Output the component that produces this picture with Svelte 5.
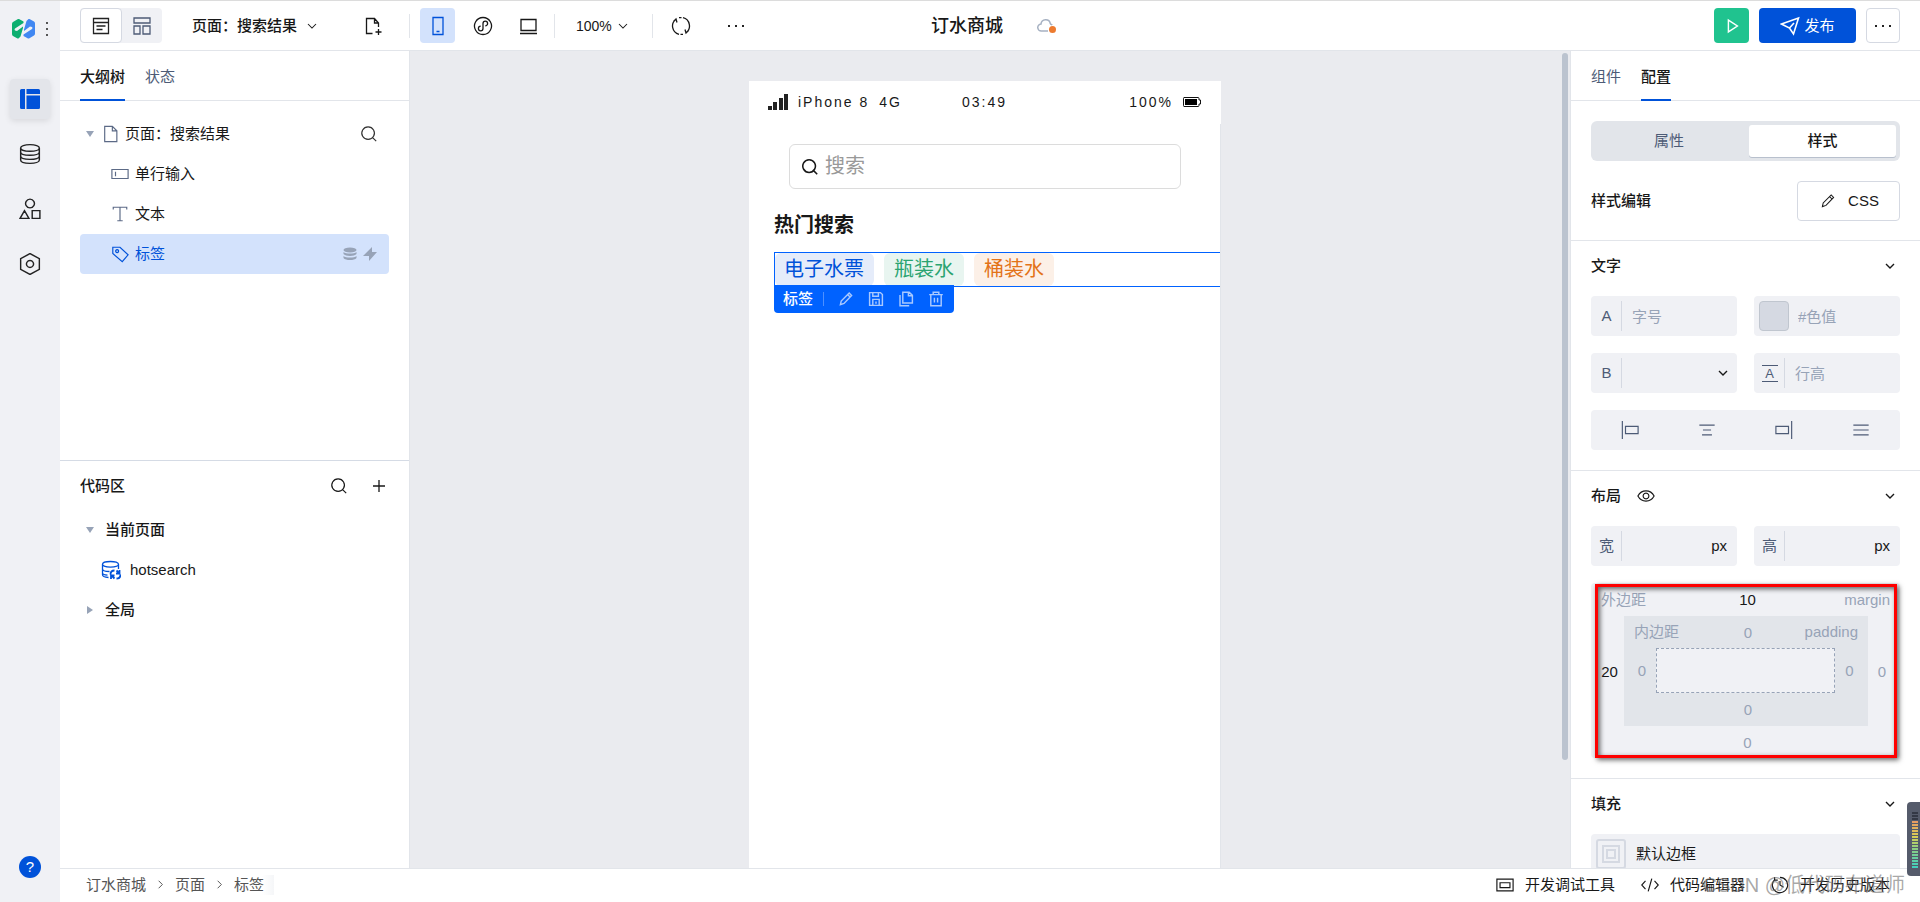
<script lang="ts">
  // Stroke icons on a 20x20 grid
  const ICONS: Record<string, string> = {
    list: 'M2.5 2.5h15v15h-15zM2.5 6.5h15M5.5 10h9M5.5 13.5h6',
    layout: 'M2 2h16v5H2zM2 10h6v8H2zM11 10h7v8h-7z',
    chevron: 'M5 7.5l5 5 5-5',
    chevronRight: 'M7.5 5l5 5-5 5',
    filePlus: 'M9.5 17.5H3.500v-15h8L15.500 7v4M11.500 2.500V7h4M15.500 13v6M12.500 16h6',
    file: 'M3 1.500h8.500l5 5v12H3zM11.500 1.500v5h5',
    phone: 'M5 1.500h10v17H5zM8.500 15.500h3',
    mini: 'M10 1.500a8.500 8.500 0 1 0 .01 0M10 12.500a2.300 2.300 0 1 1-2.300-2.300M10 12.500v-5M10 7.500a2.300 2.300 0 1 1 2.300 2.300',
    laptop: 'M3 3.500h15v11H3zM2 17.500h17',
    refresh: 'M5 3.200a8.500 8.500 0 0 0 3 15.100M15 16.800a8.500 8.500 0 0 0-3-15.100M2.500 5.500l2.500-2.500 1 3.500M17.500 14.500l-2.500 2.500-1-3.500M8 1.700h2.500M9.500 18.400h2.500',
    search: 'M9 2a7 7 0 1 0 .01 0M14 14l4 4',
    plus: 'M10 4v12M4 10h12',
    input: 'M1 5h18v10H1zM5 7.500v5',
    text: 'M2.500 5V2.500h15V5M10 3v14.500M7 17.500h6',
    tag: 'M2 2.500h8l9 8.500-6.500 7.500L2 9.500zM6.800 5.200a1.600 1.600 0 1 0 .01 0',
    database: 'M10 1.500c-5 0-8.500 1.200-8.500 3s3.500 3 8.500 3 8.500-1.200 8.500-3-3.500-3-8.500-3zM1.500 4.500v11c0 1.800 3.500 3 8.500 3s8.500-1.200 8.500-3v-11M1.500 8.200c0 1.800 3.500 3 8.500 3s8.500-1.200 8.500-3M1.500 11.900c0 1.800 3.500 3 8.500 3s8.500-1.200 8.500-3',
    shapes: 'M10 1a4 4 0 1 0 .01 0M5 11.500l-4 7h8zM12 11.500h7v7h-7z',
    hexagon: 'M10 .5l8.500 4.700v9.600L10 19.500l-8.500-4.700V5.200zM10 6.800a3.200 3.200 0 1 0 .01 0',
    play: 'M6 3.500l10 6.500-10 6.500z',
    send: 'M1.500 8L18.500 2l-5 16-4-6zM9.500 12L14 7',
    pencil: 'M3 17l1-4.500L14 2.500l3 3L7.500 15.500zM12 4.500l3 3',
    save: 'M2 2h13.500L18 4.500V18H2zM6 2v4.500h7V2M6 18v-7.500h8V18M10 13v3',
    copy: 'M6 1.500h8l4 4V15H6zM13 1.500V6h5M2.500 5v13.500H14',
    trash: 'M1.500 4.500h17M6.500 4.500V1.500h7v3M3.500 4.500v14h13v-14M8 8.500v6M12 8.500v6',
    eye: 'M1 10c4-7.500 14-7.500 18 0-4 7.500-14 7.500-18 0zM10 6.800a3.200 3.200 0 1 0 .01 0',
    alignLeft: 'M1.500 0v20M5 6h14v8H5z',
    alignCenter: 'M1.500 4.500h17M5.500 10h9M4.500 15.500h11',
    alignRight: 'M18.500 0v20M1 6h14v8H1z',
    justify: 'M1.500 4.500h17M1.500 10h17M1.500 15.500h17',
    debug: 'M1 3.500h18v13H1zM4.500 7.500h11v5.500h-11z',
    code: 'M5 5.500L.8 10 5 14.500M15 5.500l4.200 4.500-4.200 4.500M12 3L8 17',
    history: 'M4 4a8.500 8.500 0 1 0 6-2.500M4 1v3.500h3.500M10 5.500V10l4 2.500'
  };

  const rail = ['database', 'shapes', 'hexagon'];

  const tree = [
    { icon: 'input', label: '单行输入' },
    { icon: 'text', label: '文本' },
    { icon: 'tag', label: '标签', selected: true }
  ];

  const tags = [
    { label: '电子水票', tone: 'blue' },
    { label: '瓶装水', tone: 'green' },
    { label: '桶装水', tone: 'orange' }
  ];

  const tagActions = [
    { icon: 'pencil', label: '编辑' },
    { icon: 'save', label: '保存' },
    { icon: 'copy', label: '复制' },
    { icon: 'trash', label: '删除' }
  ];

  const crumbs = ['订水商城', '页面', '标签'];

  const tools = [
    { icon: 'debug', label: '开发调试工具' },
    { icon: 'code', label: '代码编辑器' },
    { icon: 'history', label: '开发历史版本' }
  ];

  const aligns = ['alignLeft', 'alignCenter', 'alignRight', 'justify'];

  let margin = $state({ top: '10', right: '0', bottom: '0', left: '20' });
  let padding = $state({ top: '0', right: '0', bottom: '0', left: '0' });
</script>

{#snippet icon(name: string, size = 18)}
  <svg class="icon" width={size} height={size} viewBox="0 0 20 20" aria-hidden="true"><path d={ICONS[name]} /></svg>
{/snippet}

{#snippet sectionTitle(label: string, withEye = false)}
  <header class="section-head">
    <h3>{label}</h3>
    {#if withEye}
      <button class="plain" aria-label="显示">{@render icon('eye', 18)}</button>
    {/if}
    <button class="plain fold" aria-label="收起{label}">{@render icon('chevron', 16)}</button>
  </header>
{/snippet}

{#snippet sideInput(box: Record<string, string>, side: string, label: string)}
  <input class="side side-{side}" class:set={box[side] !== '0'} aria-label="{label} {side}" bind:value={box[side]} />
{/snippet}

<div class="app">
  <aside class="rail">
    <div class="brand">
      <svg width="24" height="20" viewBox="0 0 24 20" aria-hidden="true">
        <path fill="#0daf70" d="M0 5q0-1.500 1-2l5-3h1l4.500 2.500v1.500L3 9.500q-1 1 0 2l2 .5 6-4.500V9L8.500 17.500 6.500 19.500h-1L1 17q-1-.5-1-2z" />
        <path fill="#4188f2" transform="rotate(180 11.500 9.750)" d="M0 5q0-1.500 1-2l5-3h1l4.500 2.500v1.500L3 9.500q-1 1 0 2l2 .5 6-4.500V9L8.500 17.500 6.500 19.500h-1L1 17q-1-.5-1-2z" />
      </svg>
      <span class="brand-dots"><i></i><i></i><i></i></span>
    </div>
    <nav class="rail-nav">
      <button class="rail-item active" aria-label="页面设计">
        <svg width="20" height="20" viewBox="0 0 20 20" aria-hidden="true">
          <path fill="#0052d9" d="M1.500 0H5v20H1.500Q0 20 0 18.500v-17Q0 0 1.500 0zM6.500 0h12Q20 0 20 1.500V5H6.500zM6.500 6.500H20v12q0 1.500-1.500 1.500h-12z" />
        </svg>
      </button>
      {#each rail as name}
        <button class="rail-item" aria-label={name}>{@render icon(name, 22)}</button>
      {/each}
    </nav>
    <button class="help" aria-label="帮助">?</button>
  </aside>

  <div class="main">
    <header class="topbar">
      <div class="top-left">
        <div class="mode">
          <button class="mode-btn active" aria-label="列表视图">{@render icon('list', 20)}</button>
          <button class="mode-btn" aria-label="布局视图">{@render icon('layout', 20)}</button>
        </div>
        <button class="plain page-name">页面：搜索结果 {@render icon('chevron', 16)}</button>
        <button class="plain new-page" aria-label="新建页面">{@render icon('filePlus', 20)}</button>
        <span class="divider"></span>
        <div class="devices">
          <button class="device active" aria-label="手机">{@render icon('phone', 20)}</button>
          <button class="device" aria-label="小程序">{@render icon('mini', 20)}</button>
          <button class="device" aria-label="电脑">{@render icon('laptop', 20)}</button>
        </div>
        <span class="divider"></span>
        <button class="plain zoom">100%{@render icon('chevron', 16)}</button>
        <span class="divider"></span>
        <button class="plain refresh" aria-label="刷新">{@render icon('refresh', 20)}</button>
        <button class="plain dots" aria-label="更多"><i></i><i></i><i></i></button>
      </div>
      <div class="top-center">
        <h1>订水商城</h1>
        <svg class="cloud" width="20" height="16" viewBox="0 0 20 16" aria-hidden="true">
          <path fill="none" stroke="#a6b1c2" stroke-width="1.500" d="M11 13H4.500a3.500 3.500 0 0 1-.5-7 4.700 4.700 0 0 1 9.300-.5c.2 1 1.500 1 2 1.500" />
          <circle cx="15.500" cy="11.500" r="3.500" fill="#ed7b2f" />
        </svg>
      </div>
      <div class="top-right">
        <button class="run" aria-label="预览">{@render icon('play', 18)}</button>
        <button class="publish">{@render icon('send', 20)}发布</button>
        <button class="more dots" aria-label="更多操作"><i></i><i></i><i></i></button>
      </div>
    </header>

    <div class="workspace">
      <section class="left-panel">
        <div class="outline">
          <div class="tabs">
            <button class="tab active">大纲树</button>
            <button class="tab">状态</button>
          </div>
          <ul class="tree">
            <li class="row root">
              <span class="caret"></span>
              {@render icon('file', 18)}
              <span class="label">页面：搜索结果</span>
              <button class="plain root-search" aria-label="搜索组件">{@render icon('search', 18)}</button>
            </li>
            {#each tree as node}
              <li class="row child" class:selected={node.selected}>
                {@render icon(node.icon, 18)}
                <span class="label">{node.label}</span>
                {#if node.selected}
                  <span class="badges">
                    <svg width="14" height="14" viewBox="0 0 14 14" aria-hidden="true">
                      <ellipse cx="7" cy="3" rx="6.500" ry="2.500" />
                      <path d="M.5 5c2 2 11 2 13 0v2c-2 2.500-11 2.500-13 0zM.5 9c2 2 11 2 13 0v2c-2 2.800-11 2.800-13 0z" />
                    </svg>
                    <svg width="14" height="14" viewBox="0 0 14 14" aria-hidden="true"><path d="M9 0v5h5L6 14V9H0z" /></svg>
                  </span>
                {/if}
              </li>
            {/each}
          </ul>
        </div>

        <div class="code">
          <header class="code-head">
            <h2>代码区</h2>
            <button class="plain" aria-label="搜索代码">{@render icon('search', 18)}</button>
            <button class="plain" aria-label="新增">{@render icon('plus', 20)}</button>
          </header>
          <ul class="tree">
            <li class="row group"><span class="caret"></span><span class="label">当前页面</span></li>
            <li class="row script">
              <svg class="icon" width="20" height="20" viewBox="0 0 20 20" aria-hidden="true">
                <path d="M9.500 1.500c-4.500 0-8 1-8 2.800s3.500 2.800 8 2.800 8-1 8-2.800-3.500-2.800-8-2.800zM1.500 4.300v10.500c0 1.500 2 2.500 6 2.700M17.500 4.300V9M1.500 9c0 1.500 2.500 2.500 7 2.500M1.500 13c0 1 1.500 1.800 5 2.200" />
                <path stroke-width="1.800" d="M9.500 14.500c0-2.500 1.500-4 4-4M15.500 10.500l3 3M19.500 14.500c0 2.500-1.500 4-4 4M13.500 18.500l-3-3M18.500 10v3.500H15M10 19v-3.500h3.500" />
              </svg>
              <span class="label">hotsearch</span>
            </li>
            <li class="row group"><span class="caret closed"></span><span class="label">全局</span></li>
          </ul>
        </div>
      </section>

      <main class="canvas">
        <div class="stage">
          <div class="device-frame">
            <div class="status">
              <span class="carrier">
                <svg width="20" height="16" viewBox="0 0 20 16" aria-hidden="true"><path d="M0 12h4v4H0zM5 8h4v8H5zM11 4h4v12h-4zM16 0h4v16h-4z" fill="#222" /></svg>
                <span>iPhone 8</span>
                <span>4G</span>
              </span>
              <span>03:49</span>
              <span class="power">
                <span>100%</span>
                <svg width="18" height="10" viewBox="0 0 18 10" aria-hidden="true">
                  <path d="M1 .5h14q1 0 1 1V3h1.500v4H16v1.500q0 1-1 1H1q-.5 0-.5-1v-7q0-1 .5-1z" fill="none" stroke="#111" />
                  <path d="M2 2h12v6H2z" fill="#000" />
                </svg>
              </span>
            </div>
            <div class="screen">
              <label class="search-box">
                {@render icon('search', 18)}
                <input placeholder="搜索" aria-label="搜索" />
              </label>
              <h2>热门搜索</h2>
              <div class="tag-row">
                {#each tags as tag}
                  <span class="tag {tag.tone}">{tag.label}</span>
                {/each}
                <div class="tag-bar">
                  <span class="tag-bar-name">标签</span>
                  {#each tagActions as action}
                    <button class="plain" aria-label={action.label}>{@render icon(action.icon, 16)}</button>
                  {/each}
                </div>
              </div>
            </div>
          </div>
        </div>
        <div class="scroll"><span class="thumb"></span></div>
      </main>

      <aside class="right-panel">
        <div class="tabs">
          <button class="tab">组件</button>
          <button class="tab active">配置</button>
        </div>
        <div class="config">
          <section class="intro">
            <div class="switch">
              <button>属性</button>
              <button class="on">样式</button>
            </div>
            <div class="edit-row">
              <h3>样式编辑</h3>
              <button class="css-btn">{@render icon('pencil', 16)}CSS</button>
            </div>
          </section>

          <section class="group-box">
            {@render sectionTitle('文字')}
            <div class="fields">
              <label class="field"><span class="prefix">A</span><input placeholder="字号" /></label>
              <label class="field"><span class="swatch"></span><input placeholder="#色值" /></label>
              <label class="field">
                <span class="prefix">B</span>
                <select aria-label="字重"><option></option></select>
                {@render icon('chevron', 16)}
              </label>
              <label class="field">
                <span class="prefix"><span class="line-height">A</span></span>
                <input placeholder="行高" />
              </label>
              <div class="aligns">
                {#each aligns as name}
                  <button class="plain" aria-label={name}>{@render icon(name, 18)}</button>
                {/each}
              </div>
            </div>
          </section>

          <section class="group-box">
            {@render sectionTitle('布局', true)}
            <div class="fields">
              <label class="field"><span class="prefix">宽</span><input /><span class="unit">px</span></label>
              <label class="field"><span class="prefix">高</span><input /><span class="unit">px</span></label>
              <div class="margin-box">
                <div class="box-top"><span>外边距</span>{@render sideInput(margin, 'top', '外边距')}<span>margin</span></div>
                {@render sideInput(margin, 'left', '外边距')}
                <div class="padding-box">
                  <div class="box-top"><span>内边距</span>{@render sideInput(padding, 'top', '内边距')}<span>padding</span></div>
                  {@render sideInput(padding, 'left', '内边距')}
                  <div class="content-box"></div>
                  {@render sideInput(padding, 'right', '内边距')}
                  <div class="box-bottom">{@render sideInput(padding, 'bottom', '内边距')}</div>
                </div>
                {@render sideInput(margin, 'right', '外边距')}
                <div class="box-bottom">{@render sideInput(margin, 'bottom', '外边距')}</div>
                <div class="highlight"></div>
              </div>
            </div>
          </section>

          <section class="group-box">
            {@render sectionTitle('填充')}
            <button class="border-pick">
              <svg width="30" height="30" viewBox="0 0 30 30" aria-hidden="true">
                <rect x="1" y="1" width="28" height="28" rx="2" />
                <rect x="7" y="7" width="16" height="16" />
                <rect x="11" y="11" width="8" height="8" />
              </svg>
              默认边框
            </button>
          </section>
        </div>
      </aside>
    </div>

    <footer class="bottom-bar">
      <nav class="crumbs">
        {#each crumbs as crumb, i}
          {#if i > 0}{@render icon('chevronRight', 15)}{/if}
          <a href="#{i}" class:last={i === crumbs.length - 1}>{crumb}</a>
        {/each}
      </nav>
      <div class="tools">
        {#each tools as tool}
          <button class="plain tool">{@render icon(tool.icon, 18)}{tool.label}</button>
        {/each}
      </div>
      <span class="watermark">CSDN @低代码布道师</span>
    </footer>
  </div>

  <div class="meter"><span></span></div>
</div>

<style>
  :global(body) {
    margin: 0;
    overflow: hidden;
  }

  .app,
  .app :is(button, input, select) {
    font-family: 'Liberation Sans', 'Noto Sans CJK SC', sans-serif;
    font-size: 15px;
  }

  .app {
    position: relative;
    display: flex;
    height: 100vh;
    box-sizing: border-box;
    border-top: 1px solid #dcdcdc;
    color: #181818;
    line-height: 20px;
    background: #fff;
  }

  .app :is(button, input, select, div, header, aside, label, span) {
    box-sizing: border-box;
  }

  h1,
  h2,
  h3,
  ul {
    margin: 0;
    padding: 0;
    list-style: none;
  }

  h2,
  h3 {
    font-size: 15px;
    font-weight: 500;
  }

  button {
    display: flex;
    align-items: center;
    justify-content: center;
    padding: 0;
    border: none;
    background: none;
    color: inherit;
    line-height: 20px;
    cursor: pointer;
  }

  input {
    flex: 1;
    min-width: 0;
    width: 100%;
    padding: 0;
    border: none;
    outline: none;
    background: none;
    color: #181818;
  }

  .icon {
    flex-shrink: 0;
    fill: none;
    stroke: currentColor;
    stroke-width: 1.300;
  }

  /* Rail */
  .rail {
    display: flex;
    flex-direction: column;
    align-items: center;
    width: 60px;
    flex-shrink: 0;
    padding: 18px 0 24px;
    background: #f0f1f5;
  }

  .brand {
    display: flex;
    align-items: center;
    gap: 10px;
    height: 20px;
  }

  .brand-dots {
    display: flex;
    flex-direction: column;
    gap: 4px;
  }

  .brand-dots i {
    width: 2px;
    height: 2px;
    background: #555;
  }

  .rail-nav {
    display: flex;
    flex-direction: column;
    gap: 15px;
    margin-top: 40px;
  }

  .rail-item {
    width: 40px;
    height: 40px;
    border-radius: 4px;
    color: #222;
  }

  .rail-item.active {
    background: #e3e5ea;
    box-shadow: 0 2px 6px rgba(0, 0, 0, 0.1);
  }

  .help {
    width: 22px;
    height: 22px;
    margin-top: auto;
    border-radius: 50%;
    background: #0052d9;
    color: #fff;
  }

  .main {
    display: flex;
    flex-direction: column;
    flex: 1;
    min-width: 0;
  }

  /* Top bar */
  .topbar {
    display: flex;
    align-items: center;
    height: 50px;
    flex-shrink: 0;
    padding: 0 20px;
    border-bottom: 1px solid #e2e5ea;
  }

  .top-left,
  .top-right {
    display: flex;
    align-items: center;
    flex: 1 1 0;
  }

  .top-right {
    justify-content: flex-end;
    gap: 10px;
  }

  .top-center {
    display: flex;
    align-items: center;
    gap: 34px;
    padding-left: 8px;
  }

  h1 {
    font-size: 18px;
    font-weight: 500;
  }

  .mode {
    display: flex;
    background: #f0f1f5;
    border-radius: 4px;
  }

  .mode-btn {
    width: 40px;
    height: 35px;
    color: #4d5b76;
  }

  .mode-btn.active {
    width: 42px;
    border: 1px solid #d5d9e2;
    border-radius: 4px;
    background: #fff;
    color: #222;
  }

  .page-name {
    margin-left: 30px;
    gap: 7px;
    font-weight: 500;
  }

  .new-page {
    margin: 0 26px 0 43px;
  }

  .divider {
    width: 1px;
    height: 24px;
    background: #e2e5ea;
  }

  .devices {
    display: flex;
    gap: 10px;
    padding: 0 9px 0 10px;
  }

  .device {
    width: 35px;
    height: 35px;
    border-radius: 4px;
  }

  .device.active {
    background: #d3e2fc;
    color: #0052d9;
  }

  .topbar .zoom {
    margin: 0 21px;
    gap: 3px;
    font-size: 14px;
  }

  .refresh {
    margin: 0 37px 0 18px;
  }

  .dots {
    gap: 5px;
  }

  .dots i {
    width: 2px;
    height: 2px;
    background: #222;
  }

  .run {
    width: 35px;
    height: 35px;
    border-radius: 4px;
    background: #20c38f;
    color: #fff;
  }

  .publish {
    width: 97px;
    height: 35px;
    gap: 4px;
    border-radius: 4px;
    background: #0052d9;
    color: #fff;
  }

  .run .icon,
  .publish .icon {
    stroke-width: 1.600;
  }

  .more {
    width: 34px;
    height: 35px;
    border: 1px solid #d5d9e2;
    border-radius: 4px;
  }

  /* Workspace */
  .workspace {
    display: flex;
    flex: 1;
    min-height: 0;
  }

  .left-panel {
    display: grid;
    grid-template-rows: 1fr 1fr;
    width: 350px;
    flex-shrink: 0;
    box-sizing: border-box;
    border-right: 1px solid #e2e5ea;
  }

  .tabs {
    display: flex;
    gap: 20px;
    height: 50px;
    flex-shrink: 0;
    padding: 0 20px;
    border-bottom: 1px solid #e2e5ea;
  }

  .tab {
    height: 50px;
    border-top: 4px solid transparent;
    border-bottom: 2px solid transparent;
    color: #4d5b76;
  }

  .tab.active {
    border-bottom-color: #0052d9;
    color: #181818;
    font-weight: 500;
  }

  .outline .tree {
    padding: 13px 20px 0;
  }

  .row {
    display: flex;
    align-items: center;
    height: 40px;
    border-radius: 4px;
  }

  .row .icon {
    color: #5c6a86;
  }

  .row .root-search .icon {
    color: #333;
  }

  .root,
  .group {
    padding-left: 6px;
  }

  .caret {
    margin-right: 8px;
    border: 4px solid transparent;
    border-top: 6px solid #97a3b7;
    border-bottom: none;
  }

  .caret.closed {
    margin: 0 9px 0 1px;
    border: 4px solid transparent;
    border-left: 6px solid #97a3b7;
    border-right: none;
  }

  .root .label {
    margin-left: 5px;
  }

  .root-search {
    margin: 0 11px 0 auto;
  }

  .child {
    padding: 0 12px 0 31px;
    gap: 6px;
  }

  .selected {
    background: #d3e2fc;
  }

  .selected .icon,
  .selected .label,
  .script .icon {
    color: #0052d9;
  }

  .badges {
    display: flex;
    gap: 6px;
    margin-left: auto;
    fill: #97a3b7;
  }

  .code {
    border-top: 1px solid #d5dbe5;
  }

  .code-head {
    display: flex;
    align-items: center;
    gap: 21px;
    height: 49px;
    padding: 2px 20px 0;
  }

  .code-head h2 {
    margin-right: auto;
  }

  .code .tree {
    padding: 0 20px;
  }

  .group .label {
    margin-left: 3px;
    font-weight: 500;
  }

  .script {
    padding-left: 21px;
    gap: 9px;
  }

  /* Canvas */
  .canvas {
    display: flex;
    flex: 1;
    min-width: 0;
    background: #eaebef;
  }

  .stage {
    display: flex;
    justify-content: center;
    flex: 1;
    padding-top: 30px;
  }

  .device-frame {
    display: flex;
    flex-direction: column;
    width: 472px;
  }

  .status {
    display: grid;
    grid-template-columns: 1fr auto 1fr;
    align-items: center;
    height: 43px;
    padding: 0 20px 2px 19px;
    background: #fff;
    font-size: 14px;
    letter-spacing: 2px;
  }

  .carrier,
  .power {
    display: flex;
    align-items: center;
    gap: 10px;
  }

  .power {
    justify-content: flex-end;
  }

  .screen {
    flex: 1;
    padding: 20px 0 0 25px;
    background: #fff;
    border-right: 1px solid #e2e5ea;
  }

  .search-box {
    display: flex;
    align-items: center;
    gap: 6px;
    height: 45px;
    margin: 0 39px 0 15px;
    padding: 0 11px;
    border: 1px solid #dcdcdc;
    border-radius: 6px;
  }

  .search-box .icon {
    stroke-width: 1.700;
  }

  .search-box input {
    font-size: 20px;
  }

  .search-box input::placeholder {
    color: #999;
  }

  .screen h2 {
    margin: 21px 0 12px;
    font-size: 20px;
    font-weight: 700;
    line-height: 30px;
  }

  .tag-row {
    position: relative;
    display: flex;
    gap: 10px;
    border: 1px solid #0062ff;
    border-right: none;
  }

  .tag {
    padding: 0 10px;
    border-radius: 6px;
    font-size: 20px;
    line-height: 33px;
  }

  .tag:first-child {
    padding-left: 9px;
  }

  .tag.blue {
    background: #e5ecfa;
    color: #0052d9;
  }

  .tag.green {
    background: #e8f5f0;
    color: #2ba471;
  }

  .tag.orange {
    background: #fcf0e7;
    color: #e37318;
  }

  .tag-bar {
    position: absolute;
    top: calc(100% - 1px);
    left: -1px;
    display: flex;
    align-items: center;
    gap: 14px;
    height: 28px;
    padding: 0 10px 1px 9px;
    border-radius: 0 0 4px 4px;
    background: #0062ff;
    color: #a9c9ff;
  }

  .tag-bar .icon {
    stroke-width: 1.800;
  }

  .tag-bar-name {
    padding-right: 10px;
    border-right: 1px solid #4d90ff;
    color: #fff;
    line-height: 14px;
    font-weight: 500;
  }

  .scroll {
    width: 10px;
    padding: 2px 2px 108px;
  }

  .thumb {
    display: block;
    height: 100%;
    border-radius: 3px;
    background: #bbc3cf;
  }

  /* Config panel */
  .right-panel {
    display: flex;
    flex-direction: column;
    width: 350px;
    flex-shrink: 0;
    border-left: 1px solid #e2e5ea;
  }

  .config {
    flex: 1;
    min-height: 0;
    overflow: hidden;
  }

  .intro {
    padding: 20px 20px 19px;
  }

  .switch {
    display: grid;
    grid-template-columns: 154px 1fr;
    height: 40px;
    box-sizing: border-box;
    padding: 4px;
    border-radius: 6px;
    background: #e2e5ea;
    color: #4d5b76;
  }

  .switch button:first-child {
    padding-right: 6px;
  }

  .switch .on {
    border-radius: 3px;
    background: #fff;
    box-shadow: 0 1px 0 #b8c0cd;
    color: #181818;
    font-weight: 500;
  }

  .edit-row {
    display: flex;
    align-items: center;
    justify-content: space-between;
    margin-top: 20px;
  }

  .css-btn {
    gap: 12px;
    width: 103px;
    height: 40px;
    padding-left: 2px;
    border: 1px solid #d5d9e2;
    border-radius: 4px;
  }

  .group-box {
    padding: 0 20px 20px;
    border-top: 1px solid #e2e5ea;
  }

  .section-head {
    display: flex;
    align-items: center;
    gap: 16px;
    height: 50px;
    margin-bottom: 5px;
  }

  .fold {
    margin: 0 2px 0 auto;
  }

  .fold .icon,
  .field .icon {
    stroke-width: 1.700;
  }

  .fields {
    display: grid;
    grid-template-columns: 1fr 1fr;
    gap: 17px;
  }

  .field {
    display: flex;
    align-items: center;
    height: 40px;
    padding: 0 6px 0 1px;
    border-radius: 4px;
    background: #f0f1f5;
  }

  .field input {
    padding-left: 10px;
  }

  .field .swatch + input {
    padding-left: 9px;
  }

  .field input::placeholder {
    color: #97a3b7;
    opacity: 1;
  }

  .prefix {
    width: 30px;
    flex-shrink: 0;
    border-right: 1px solid #d5d9e2;
    color: #4d5b76;
    text-align: center;
    line-height: 30px;
  }

  .line-height {
    display: inline-block;
    width: 16px;
    border-top: 1px solid #4d5b76;
    border-bottom: 1px solid #4d5b76;
    font-size: 13px;
    line-height: 15px;
  }

  .swatch {
    width: 30px;
    height: 30px;
    flex-shrink: 0;
    margin-left: 4px;
    border: 1px solid #c0c6cf;
    border-radius: 4px;
    background: #d5d9e2;
  }

  .field select {
    flex: 1;
    min-width: 0;
    border: none;
    background: none;
    appearance: none;
  }

  .unit {
    padding-right: 4px;
  }

  .aligns {
    display: flex;
    justify-content: space-around;
    grid-column: 1 / -1;
    height: 40px;
    border-radius: 4px;
    background: #f0f1f5;
    color: #4d5b76;
  }

  .margin-box,
  .padding-box {
    display: grid;
    grid-template-columns: 33px 1fr 32px;
    grid-template-rows: 33px 1fr 32px;
    align-items: center;
    color: #97a3b7;
  }

  .margin-box {
    position: relative;
    grid-column: 1 / -1;
    height: 175px;
    border-radius: 4px;
    background: #f0f1f5;
  }

  .padding-box {
    grid-template-columns: 32px 1fr 33px;
    grid-template-rows: 32px 1fr 33px;
    height: 100%;
    background: #e2e5ea;
  }

  .box-top,
  .box-bottom {
    grid-column: 1 / -1;
    display: grid;
    grid-template-columns: 1fr 28px 1fr;
    padding: 0 10px;
  }

  .box-top span:last-child {
    text-align: right;
  }

  .box-bottom .side {
    grid-column: 2;
  }

  .side {
    padding-left: 4px;
    color: #97a3b7;
    text-align: center;
  }

  .side-right {
    padding: 0 4px 0 0;
  }

  .side.set {
    color: #181818;
  }

  .content-box {
    height: 100%;
    border: 1px dashed #97a3b7;
    background: #f0f1f5;
  }

  /* Callout around the box model */
  .highlight {
    position: absolute;
    inset: 1px 3px 0 4px;
    border: 3px solid #fe0000;
    box-shadow: 2px 2px 5px rgba(0, 0, 0, 0.6), inset 2px 2px 5px rgba(0, 0, 0, 0.6);
    pointer-events: none;
  }

  .border-pick {
    justify-content: flex-start;
    gap: 10px;
    width: 100%;
    height: 40px;
    padding-left: 5px;
    border-radius: 4px;
    background: #f0f1f5;
  }

  .border-pick svg {
    fill: none;
    stroke: #d5d9e2;
    stroke-width: 2;
  }

  /* Footer */
  .bottom-bar {
    position: relative;
    display: flex;
    align-items: center;
    justify-content: space-between;
    height: 34px;
    flex-shrink: 0;
    box-sizing: border-box;
    padding: 0 30px 2px 26px;
    border-top: 1px solid #e2e5ea;
  }

  .crumbs,
  .tools {
    display: flex;
    align-items: center;
  }

  .crumbs {
    gap: 7px;
    color: #555;
  }

  .crumbs a {
    color: inherit;
    text-decoration: none;
  }

  .crumbs .last {
    padding-right: 10px;
    background: linear-gradient(90deg, #fff 70%, #f5f6f8);
  }

  .tools {
    gap: 26px;
  }

  .tool {
    gap: 11px;
  }

  .watermark {
    position: absolute;
    right: 15px;
    color: rgba(110, 110, 110, 0.6);
    font-size: 20px;
    pointer-events: none;
  }

  .meter {
    position: absolute;
    right: 0;
    bottom: 26px;
    width: 13px;
    height: 74px;
    padding: 9px 2px 8px 5px;
    border-radius: 4px 0 0 4px;
    background: #555b6b;
  }

  .meter span {
    display: block;
    height: 100%;
    background:
      repeating-linear-gradient(#555b6b 0 1px, transparent 1px 3px),
      linear-gradient(#333845 0 17%, #e89a63 18%, #d9cf55 45%, #8fd080 65%, #3fd0c0);
  }
</style>
